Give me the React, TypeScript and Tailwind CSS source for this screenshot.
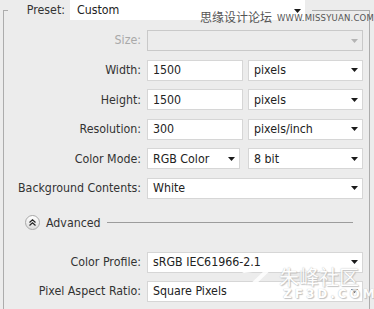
import React from 'react';

function Arrow({ muted = false }: { muted?: boolean }) {
  return (
    <svg width="7" height="4" viewBox="0 0 7 4" className="shrink-0">
      <polygon points="0,0 7,0 3.5,4" fill={muted ? '#b4b4b4' : '#1a1a1a'} />
    </svg>
  );
}

function Field({ value, className = '' }: { value: string; className?: string }) {
  return (
    <div
      className={`h-full flex items-center bg-white border border-[#d6d6d6] pl-[5px] text-[#222] ${className}`}>
      {value}
    </div>
  );
}

function Select({ value, className = '', disabled = false }: { value: string; className?: string; disabled?: boolean }) {
  return (
    <div
      className={`h-full flex items-center justify-between border pl-[5px] pr-[4px] ${
      disabled ? 'bg-[#ececec] border-[#c9c9c9]' : 'bg-white border-[#d6d6d6] text-[#222]'} ${
      className}`}>
      <span>{value}</span>
      <Arrow muted={disabled} />
    </div>
  );
}

function Row({ label, muted = false, children }: { label: string; muted?: boolean; children: React.ReactNode }) {
  return (
    <div className="flex items-center h-[21px]">
      <div className={`w-[138px] text-right pr-[1px] whitespace-nowrap ${muted ? 'text-[#a9a9a9]' : 'text-[#333]'}`}>{label}</div>
      <div className="flex-1 h-full ml-[5px] flex gap-[5px]">{children}</div>
    </div>
  );
}

export default function App() {
  return (
    <div className="relative w-[374px] h-[309px] overflow-hidden bg-[#ececec] font-['DejaVu_Sans_Condensed','Liberation_Sans',sans-serif] text-[12.3px] leading-none">
      <fieldset className="ml-[3px] mr-[4px] h-[330px] border border-[#acacac] pr-[6px] pt-[10px]">
        <legend className="ml-[4px] flex items-center h-[20px] w-[304px] bg-[#ececec]">
          <span className="w-[62px] text-right pr-[5px] text-[#333]">Preset:</span>
          <div className="h-[20px] w-[235px] bg-white flex items-center pl-[7px] text-[#222]">Custom</div>
        </legend>

        <div className="flex flex-col gap-y-[8.6px]">
          <Row label="Size:" muted>
            <Select value="" disabled className="w-full" />
          </Row>
          <Row label="Width:">
            <Field value="1500" className="w-[96px]" />
            <Select value="pixels" className="flex-1" />
          </Row>
          <Row label="Height:">
            <Field value="1500" className="w-[96px]" />
            <Select value="pixels" className="flex-1" />
          </Row>
          <Row label="Resolution:">
            <Field value="300" className="w-[96px]" />
            <Select value="pixels/inch" className="flex-1" />
          </Row>
          <Row label="Color Mode:">
            <Select value="RGB Color" className="w-[93px] mr-[3px]" />
            <Select value="8 bit" className="flex-1" />
          </Row>
          <Row label="Background Contents:">
            <Select value="White" className="w-full" />
          </Row>
        </div>

        {/* Advanced */}
        <div className="flex items-center h-[16px] mt-[16px] pl-[21px]">
          <div className="w-[15px] h-[15px] rounded-full border border-[#a8a8a8] bg-gradient-to-b from-white to-[#dcdcdc] flex items-center justify-center">
            <svg width="7" height="7" viewBox="0 0 7 7">
              <polyline points="0.5,3.5 3.5,0.8 6.5,3.5" fill="none" stroke="#222" strokeWidth="1.2" />
              <polyline points="0.5,6.5 3.5,3.8 6.5,6.5" fill="none" stroke="#222" strokeWidth="1.2" />
            </svg>
          </div>
          <span className="ml-[6px] text-[#333]">Advanced</span>
          <div className="ml-[6px] flex-1 h-px bg-[#9c9c9c] mr-[10px]" />
        </div>

        <div className="flex flex-col gap-y-[8px] mt-[21px]">
          <Row label="Color Profile:">
            <Select value="sRGB IEC61966-2.1" className="w-full" />
          </Row>
          <Row label="Pixel Aspect Ratio:">
            <Select value="Square Pixels" className="w-full" />
          </Row>
        </div>
      </fieldset>

      {/* watermark top */}
      <div className="absolute left-[200px] top-[10px] flex items-end gap-[5px] text-[#555] whitespace-nowrap">
        <span className="font-['Noto_Sans_CJK_SC',sans-serif] text-[12px] leading-[13px]">思缘设计论坛</span>
        <span className="text-[8.5px] font-['DejaVu_Sans',sans-serif] tracking-[0.2px] leading-[10px]">WWW.MISSYUAN.COM</span>
      </div>
      <div className="absolute left-[294px] top-[9px]">
        <Arrow />
      </div>

      {/* watermark bottom */}
      <div className="absolute left-[279px] top-[266px] whitespace-nowrap text-white opacity-85 [text-shadow:0_0_1px_#aaa,1px_1px_1px_#bbb] font-['Noto_Sans_CJK_SC',sans-serif] text-[20px] leading-[22px]">
        朱峰社区
      </div>
      <div className="absolute left-[283px] top-[288px] whitespace-nowrap text-white opacity-85 [text-shadow:0_0_1px_#aaa,1px_1px_1px_#bbb] font-['DejaVu_Sans',sans-serif] font-bold text-[12px] leading-[12px] tracking-[3px]">
        ZF3D.COM
      </div>
      <svg className="absolute left-[240px] top-[265px]" width="40" height="30" viewBox="0 0 40 30">
        <path d="M4 6 L30 3 L8 24 L36 20" fill="none" stroke="white" strokeWidth="4" strokeLinecap="round" opacity="0.85" />
      </svg>
    </div>
  );
}
